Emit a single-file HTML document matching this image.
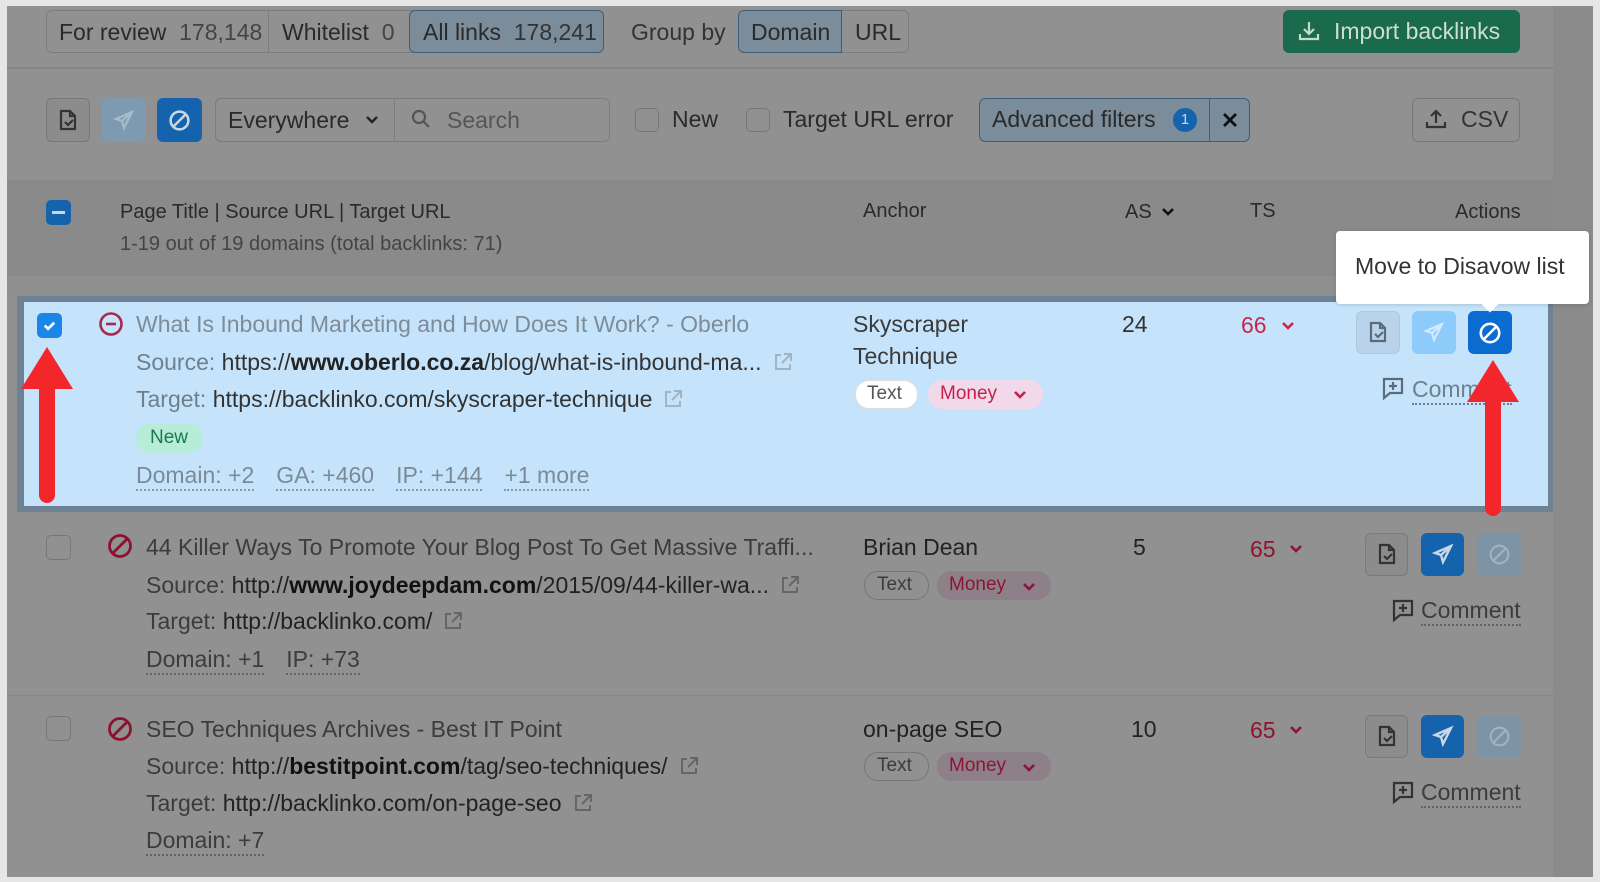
<!DOCTYPE html>
<html><head><meta charset="utf-8">
<style>
*{box-sizing:border-box;margin:0;padding:0}
body{width:1600px;height:882px;background:#e6e6e6;position:relative;overflow:hidden;font-family:"Liberation Sans",sans-serif;color:#2a2a2a}
.a{position:absolute}
.t{position:absolute;line-height:26px;font-size:23px;white-space:nowrap}
.h{font-size:20px}
.p{font-size:19px}
.btn{position:absolute;border-radius:6px}
.dot{border-bottom:2px dotted #666;padding-bottom:1px;margin-right:22px}
.ext{display:inline-block;vertical-align:-3px;margin-left:10px}
</style></head><body>
<div class="a" style="left:7px;top:6px;width:1546px;height:871px;background:#919191"></div>
<div class="a" style="left:1553px;top:6px;width:40px;height:871px;background:#8b8b8b"></div>
<!-- top tabs -->
<div class="a" style="left:46px;top:10px;width:558px;height:43px;border:1px solid #7c7c7c;border-radius:6px"></div>
<div class="a" style="left:268px;top:10px;width:1px;height:43px;background:#7c7c7c"></div>
<div class="a" style="left:409px;top:10px;width:195px;height:43px;background:#7b8c9a;border:1px solid #3e5f7c;border-radius:6px"></div>
<div class="t" style="left:59px;top:19px">For review&nbsp;&nbsp;<span style="color:#444">178,148</span></div>
<div class="t" style="left:282px;top:19px">Whitelist&nbsp;&nbsp;<span style="color:#444">0</span></div>
<div class="t" style="left:423px;top:19px">All links&nbsp;&nbsp;<span style="color:#333">178,241</span></div>
<div class="t" style="left:631px;top:19px;color:#333">Group by</div>
<div class="a" style="left:738px;top:10px;width:171px;height:43px;border:1px solid #7c7c7c;border-radius:6px"></div>
<div class="a" style="left:738px;top:10px;width:104px;height:43px;background:#7b8c9a;border:1px solid #3e5f7c;border-radius:6px 0 0 6px"></div>
<div class="t" style="left:751px;top:19px">Domain</div>
<div class="t" style="left:855px;top:19px">URL</div>
<div class="btn" style="left:1283px;top:10px;width:237px;height:43px;background:#1a6a4e"></div>
<svg class="a" style="left:1297px;top:19px" width="24" height="24" viewBox="0 0 24 24" fill="none" stroke="#c8d8d0" stroke-width="2.2"><path d="M12 3v12M7 10l5 5 5-5M3 15v5h18v-5"/></svg>
<div class="t" style="left:1334px;top:18px;color:#d0ddd6">Import backlinks</div>
<div class="a" style="left:7px;top:67px;width:1546px;height:2px;background:#868686"></div>
<!-- toolbar -->
<div class="btn" style="left:46px;top:98px;width:44px;height:44px;border:1px solid #777;background:#8c8c8c"></div>
<svg class="a" style="left:56px;top:108px" width="24" height="24" viewBox="0 0 24 24" fill="none" stroke="#333" stroke-width="2.2"><path d="M14 3H5v18h14V8zM14 3v5h5M9 14l3 3 5-5"/></svg>
<div class="btn" style="left:102px;top:98px;width:44px;height:44px;background:#7d9ab0"></div>
<svg class="a" style="left:112px;top:108px" width="24" height="24" viewBox="0 0 24 24" fill="none" stroke="#a7bccb" stroke-width="2.2"><path d="M20 4L4 11l6 2 2 7zM10 13l10-9"/></svg>
<div class="btn" style="left:157px;top:98px;width:45px;height:44px;background:#1563ac"></div>
<svg class="a" style="left:167px;top:108px" width="25" height="25" viewBox="0 0 24 24" fill="none" stroke="#c9d8e6" stroke-width="2.4"><circle cx="12" cy="12" r="8.5"/><path d="M6 18L18 6"/></svg>
<div class="a" style="left:215px;top:98px;width:395px;height:44px;border:1px solid #7c7c7c;border-radius:6px"></div>
<div class="a" style="left:394px;top:98px;width:1px;height:44px;background:#7c7c7c"></div>
<div class="t" style="left:228px;top:107px">Everywhere</div>
<svg class="a" style="left:364px;top:113px" width="16" height="14" viewBox="0 0 16 14" fill="none" stroke="#222" stroke-width="2.4"><path d="M3 4l5 5 5-5"/></svg>
<svg class="a" style="left:409px;top:107px" width="24" height="24" viewBox="0 0 24 24" fill="none" stroke="#555" stroke-width="2.2"><circle cx="10" cy="10" r="6"/><path d="M14.5 14.5L20 20"/></svg>
<div class="t" style="left:447px;top:107px;color:#555">Search</div>
<div class="a" style="left:635px;top:108px;width:24px;height:24px;border:1px solid #777;border-radius:5px"></div>
<div class="t" style="left:672px;top:106px">New</div>
<div class="a" style="left:746px;top:108px;width:24px;height:24px;border:1px solid #777;border-radius:5px"></div>
<div class="t" style="left:783px;top:106px">Target URL error</div>
<div class="a" style="left:979px;top:98px;width:271px;height:44px;background:#7b8c9a;border:1px solid #3e5f7c;border-radius:6px"></div>
<div class="a" style="left:1209px;top:98px;width:1px;height:44px;background:#3e5f7c"></div>
<div class="t" style="left:992px;top:106px">Advanced filters</div>
<div class="a" style="left:1173px;top:108px;width:24px;height:24px;border-radius:12px;background:#1563ac;color:#c9d8e6;font-size:15px;text-align:center;line-height:24px">1</div>
<svg class="a" style="left:1220px;top:110px" width="20" height="20" viewBox="0 0 20 20" stroke="#111" stroke-width="2.8"><path d="M4 4l12 12M16 4L4 16"/></svg>
<div class="btn" style="left:1412px;top:98px;width:108px;height:44px;border:1px solid #777"></div>
<svg class="a" style="left:1424px;top:107px" width="24" height="24" viewBox="0 0 24 24" fill="none" stroke="#333" stroke-width="2.2"><path d="M12 16V4M7 9l5-5 5 5M3 15v5h18v-5"/></svg>
<div class="t" style="left:1461px;top:106px;color:#333">CSV</div>
<!-- header band -->
<div class="a" style="left:7px;top:180px;width:1546px;height:97px;background:#8a8a8a"></div>
<div class="a" style="left:7px;top:276px;width:1546px;height:20px;background:#8f8f8f"></div>
<div class="a" style="left:46px;top:200px;width:25px;height:25px;border-radius:5px;background:#1563ac"></div>
<div class="a" style="left:52px;top:211px;width:13px;height:3px;background:#c9d8e6"></div>
<div class="t h" style="left:120px;top:199px">Page Title | Source URL | Target URL</div>
<div class="t h" style="left:120px;top:231px;color:#444">1-19 out of 19 domains (total backlinks: 71)</div>
<div class="t h" style="left:863px;top:198px">Anchor</div>
<div class="t h" style="left:1125px;top:199px">AS</div>
<svg class="a" style="left:1160px;top:205px" width="16" height="14" viewBox="0 0 16 14" fill="none" stroke="#111" stroke-width="2.6"><path d="M3 4l5 5 5-5"/></svg>
<div class="t h" style="left:1250px;top:198px">TS</div>
<div class="t h" style="left:1455px;top:199px">Actions</div>
<!-- highlighted row -->
<div class="a" style="left:17px;top:296px;width:1536px;height:216px;background:#6f8293"></div>
<div class="a" style="left:24px;top:302px;width:1524px;height:204px;background:#c5e4fb"></div>
<div class="a" style="left:37px;top:313px;width:25px;height:25px;border-radius:5px;background:#1a86ea"></div>
<svg class="a" style="left:40px;top:316px" width="19" height="19" viewBox="0 0 20 20" fill="none" stroke="#fff" stroke-width="2.8"><path d="M5 10l3.5 3.5L15 7"/></svg>
<svg class="a" style="left:98px;top:311px" width="26" height="26" viewBox="0 0 26 26" fill="none" stroke="#a8294c" stroke-width="2.6"><circle cx="13" cy="13" r="10.5"/><path d="M8 13h10"/></svg>
<div class="t" style="left:136px;top:311px;color:#7d8c98">What Is Inbound Marketing and How Does It Work? - Oberlo</div>
<div class="t" style="left:136px;top:349px;color:#6f7f8c">Source: <span style="color:#333">https://<b style="color:#222">www.oberlo.co.za</b>/blog/what-is-inbound-ma...</span><svg class="ext" width="22" height="22" viewBox="0 0 22 22" fill="none" stroke="#a3b3c0" stroke-width="2"><path d="M9 4H4v14h14v-5M12 3h7v7M19 3l-9 9"/></svg></div>
<div class="t" style="left:136px;top:386px;color:#6f7f8c">Target: <span style="color:#333">https://backlinko.com/skyscraper-technique</span><svg class="ext" width="22" height="22" viewBox="0 0 22 22" fill="none" stroke="#a3b3c0" stroke-width="2"><path d="M9 4H4v14h14v-5M12 3h7v7M19 3l-9 9"/></svg></div>
<div class="a" style="left:136px;top:423px;width:67px;height:30px;border-radius:14px;background:#b7ecd8"></div>
<div class="t p" style="left:150px;top:425px;color:#167a52">New</div>
<div class="t" style="left:136px;top:462px;color:#7b8a96"><span class="dot" style="border-color:#8a98a4">Domain: +2</span><span class="dot" style="border-color:#8a98a4">GA: +460</span><span class="dot" style="border-color:#8a98a4">IP: +144</span><span class="dot" style="border-color:#8a98a4">+1 more</span></div>
<div class="t" style="left:853px;top:311px;color:#3a3a3a">Skyscraper</div>
<div class="t" style="left:853px;top:343px;color:#3a3a3a">Technique</div>
<div class="a" style="left:855px;top:380px;width:63px;height:29px;border-radius:14px;background:#fff;border:1px solid #ddd"></div>
<div class="t p" style="left:867px;top:381px;color:#555">Text</div>
<div class="a" style="left:928px;top:380px;width:115px;height:29px;border-radius:14px;background:#f2d9ea"></div>
<div class="t p" style="left:940px;top:381px;color:#c4214a">Money</div>
<svg class="a" style="left:1012px;top:388px" width="16" height="14" viewBox="0 0 16 14" fill="none" stroke="#c4214a" stroke-width="2.6"><path d="M3 4l5 5 5-5"/></svg>
<div class="t" style="left:1122px;top:311px;color:#333">24</div>
<div class="t" style="left:1241px;top:312px;color:#c8264a">66</div>
<svg class="a" style="left:1280px;top:319px" width="16" height="14" viewBox="0 0 16 14" fill="none" stroke="#c8264a" stroke-width="2.6"><path d="M3 4l5 5 5-5"/></svg>
<div class="btn" style="left:1356px;top:311px;width:44px;height:43px;background:#b9d4ea;border:1px solid #b0c8dc"></div>
<svg class="a" style="left:1366px;top:320px" width="24" height="24" viewBox="0 0 24 24" fill="none" stroke="#5b6b79" stroke-width="2.2"><path d="M14 3H5v18h14V8zM14 3v5h5M9 14l3 3 5-5"/></svg>
<div class="btn" style="left:1412px;top:311px;width:44px;height:43px;background:#8ccbfa"></div>
<svg class="a" style="left:1422px;top:320px" width="24" height="24" viewBox="0 0 24 24" fill="none" stroke="#d3ebfd" stroke-width="2.2"><path d="M20 4L4 11l6 2 2 7zM10 13l10-9"/></svg>
<div class="btn" style="left:1468px;top:311px;width:44px;height:43px;background:#0a6bd0"></div>
<svg class="a" style="left:1477px;top:320px" width="26" height="26" viewBox="0 0 24 24" fill="none" stroke="#fff" stroke-width="2.4"><circle cx="12" cy="12" r="8.5"/><path d="M6 18L18 6"/></svg>
<svg class="a" style="left:1381px;top:376px" width="24" height="26" viewBox="0 0 24 26" fill="none" stroke="#5b6b79" stroke-width="2.2"><path d="M3 3h18v14H9l-6 5zM12 6v8M8 10h8"/></svg>
<div class="t" style="left:1412px;top:376px;color:#6f7f8c"><span class="dot" style="border-color:#6f7f8c">Comment</span></div>
<!-- tooltip -->
<div class="a" style="left:1336px;top:231px;width:253px;height:73px;background:#fff;border-radius:4px;box-shadow:0 1px 4px rgba(0,0,0,.15)"></div>
<div class="a" style="left:1484px;top:298px;width:12px;height:12px;background:#fff;transform:rotate(45deg)"></div>
<div class="t" style="left:1355px;top:253px;color:#333">Move to Disavow list</div>
<!-- red arrows -->
<svg class="a" style="left:18px;top:345px" width="60" height="160" viewBox="0 0 60 160"><path d="M29 2L55 44H37V150a8 8 0 0 1-16 0V44H3z" fill="#f3262c"/></svg>
<svg class="a" style="left:1463px;top:358px" width="60" height="160" viewBox="0 0 60 160"><path d="M30 2L56 44H38V150a8 8 0 0 1-16 0V44H4z" fill="#f3262c"/></svg>
<!-- row 2 -->
<div class="a" style="left:46px;top:535px;width:25px;height:25px;border:1px solid #777;border-radius:5px"></div>
<svg class="a" style="left:107px;top:533px" width="26" height="26" viewBox="0 0 26 26" fill="none" stroke="#8c1230" stroke-width="2.8"><circle cx="13" cy="13" r="10.5"/><path d="M6 20L20 6"/></svg>
<div class="t" style="left:146px;top:534px;color:#3c3c3c">44 Killer Ways To Promote Your Blog Post To Get Massive Traffi...</div>
<div class="t" style="left:146px;top:572px;color:#3c3c3c">Source: <span style="color:#222">http://<b style="color:#111">www.joydeepdam.com</b>/2015/09/44-killer-wa...</span><svg class="ext" width="22" height="22" viewBox="0 0 22 22" fill="none" stroke="#666" stroke-width="2"><path d="M9 4H4v14h14v-5M12 3h7v7M19 3l-9 9"/></svg></div>
<div class="t" style="left:146px;top:608px;color:#3c3c3c">Target: <span style="color:#222">http://backlinko.com/</span><svg class="ext" width="22" height="22" viewBox="0 0 22 22" fill="none" stroke="#666" stroke-width="2"><path d="M9 4H4v14h14v-5M12 3h7v7M19 3l-9 9"/></svg></div>
<div class="t" style="left:146px;top:646px;color:#3c3c3c"><span class="dot">Domain: +1</span><span class="dot">IP: +73</span></div>
<div class="t" style="left:863px;top:534px;color:#222">Brian Dean</div>
<div class="a" style="left:864px;top:571px;width:65px;height:29px;border-radius:14px;border:1px solid #777"></div>
<div class="t p" style="left:877px;top:572px;color:#3c3c3c">Text</div>
<div class="a" style="left:937px;top:571px;width:114px;height:29px;border-radius:14px;background:#8e8088"></div>
<div class="t p" style="left:949px;top:572px;color:#8d1434">Money</div>
<svg class="a" style="left:1021px;top:580px" width="16" height="14" viewBox="0 0 16 14" fill="none" stroke="#8d1434" stroke-width="2.6"><path d="M3 4l5 5 5-5"/></svg>
<div class="t" style="left:1133px;top:534px;color:#222">5</div>
<div class="t" style="left:1250px;top:536px;color:#8d1434">65</div>
<svg class="a" style="left:1288px;top:542px" width="16" height="14" viewBox="0 0 16 14" fill="none" stroke="#8d1434" stroke-width="2.6"><path d="M3 4l5 5 5-5"/></svg>
<div class="a" style="left:7px;top:695px;width:1546px;height:1px;background:#858585"></div>
<!-- row 3 -->
<div class="a" style="left:46px;top:716px;width:25px;height:25px;border:1px solid #777;border-radius:5px"></div>
<svg class="a" style="left:107px;top:716px" width="26" height="26" viewBox="0 0 26 26" fill="none" stroke="#8c1230" stroke-width="2.8"><circle cx="13" cy="13" r="10.5"/><path d="M6 20L20 6"/></svg>
<div class="t" style="left:146px;top:716px;color:#3c3c3c">SEO Techniques Archives - Best IT Point</div>
<div class="t" style="left:146px;top:753px;color:#3c3c3c">Source: <span style="color:#222">http://<b style="color:#111">bestitpoint.com</b>/tag/seo-techniques/</span><svg class="ext" width="22" height="22" viewBox="0 0 22 22" fill="none" stroke="#666" stroke-width="2"><path d="M9 4H4v14h14v-5M12 3h7v7M19 3l-9 9"/></svg></div>
<div class="t" style="left:146px;top:790px;color:#3c3c3c">Target: <span style="color:#222">http://backlinko.com/on-page-seo</span><svg class="ext" width="22" height="22" viewBox="0 0 22 22" fill="none" stroke="#666" stroke-width="2"><path d="M9 4H4v14h14v-5M12 3h7v7M19 3l-9 9"/></svg></div>
<div class="t" style="left:146px;top:827px;color:#3c3c3c"><span class="dot">Domain: +7</span></div>
<div class="t" style="left:863px;top:716px;color:#222">on-page SEO</div>
<div class="a" style="left:864px;top:752px;width:65px;height:29px;border-radius:14px;border:1px solid #777"></div>
<div class="t p" style="left:877px;top:753px;color:#3c3c3c">Text</div>
<div class="a" style="left:937px;top:752px;width:114px;height:29px;border-radius:14px;background:#8e8088"></div>
<div class="t p" style="left:949px;top:753px;color:#8d1434">Money</div>
<svg class="a" style="left:1021px;top:761px" width="16" height="14" viewBox="0 0 16 14" fill="none" stroke="#8d1434" stroke-width="2.6"><path d="M3 4l5 5 5-5"/></svg>
<div class="t" style="left:1131px;top:716px;color:#222">10</div>
<div class="t" style="left:1250px;top:717px;color:#8d1434">65</div>
<svg class="a" style="left:1288px;top:723px" width="16" height="14" viewBox="0 0 16 14" fill="none" stroke="#8d1434" stroke-width="2.6"><path d="M3 4l5 5 5-5"/></svg>
<!-- row2/3 actions -->
<div class="btn" style="left:1365px;top:533px;width:43px;height:43px;border:1px solid #7a7a7a;background:#8c8c8c"></div>
<svg class="a" style="left:1375px;top:542px" width="24" height="24" viewBox="0 0 24 24" fill="none" stroke="#333" stroke-width="2.2"><path d="M14 3H5v18h14V8zM14 3v5h5M9 14l3 3 5-5"/></svg>
<div class="btn" style="left:1421px;top:533px;width:43px;height:43px;background:#1563ac"></div>
<svg class="a" style="left:1431px;top:542px" width="24" height="24" viewBox="0 0 24 24" fill="none" stroke="#c9d8e6" stroke-width="2.4"><path d="M20 4L4 11l6 2 2 7zM10 13l10-9"/></svg>
<div class="btn" style="left:1478px;top:533px;width:43px;height:43px;background:#7d93a6"></div>
<svg class="a" style="left:1487px;top:542px" width="25" height="25" viewBox="0 0 24 24" fill="none" stroke="#a1b3c2" stroke-width="2"><circle cx="12" cy="12" r="8.5"/><path d="M6 18L18 6"/></svg>
<svg class="a" style="left:1391px;top:598px" width="24" height="26" viewBox="0 0 24 26" fill="none" stroke="#333" stroke-width="2.2"><path d="M3 3h18v14H9l-6 5zM12 6v8M8 10h8"/></svg>
<div class="t" style="left:1421px;top:597px;color:#3c3c3c"><span class="dot" style="margin-right:0">Comment</span></div>
<div class="btn" style="left:1365px;top:715px;width:43px;height:43px;border:1px solid #7a7a7a;background:#8c8c8c"></div>
<svg class="a" style="left:1375px;top:724px" width="24" height="24" viewBox="0 0 24 24" fill="none" stroke="#333" stroke-width="2.2"><path d="M14 3H5v18h14V8zM14 3v5h5M9 14l3 3 5-5"/></svg>
<div class="btn" style="left:1421px;top:715px;width:43px;height:43px;background:#1563ac"></div>
<svg class="a" style="left:1431px;top:724px" width="24" height="24" viewBox="0 0 24 24" fill="none" stroke="#c9d8e6" stroke-width="2.4"><path d="M20 4L4 11l6 2 2 7zM10 13l10-9"/></svg>
<div class="btn" style="left:1478px;top:715px;width:43px;height:43px;background:#7d93a6"></div>
<svg class="a" style="left:1487px;top:724px" width="25" height="25" viewBox="0 0 24 24" fill="none" stroke="#a1b3c2" stroke-width="2"><circle cx="12" cy="12" r="8.5"/><path d="M6 18L18 6"/></svg>
<svg class="a" style="left:1391px;top:780px" width="24" height="26" viewBox="0 0 24 26" fill="none" stroke="#333" stroke-width="2.2"><path d="M3 3h18v14H9l-6 5zM12 6v8M8 10h8"/></svg>
<div class="t" style="left:1421px;top:779px;color:#3c3c3c"><span class="dot" style="margin-right:0">Comment</span></div>
</body></html>
